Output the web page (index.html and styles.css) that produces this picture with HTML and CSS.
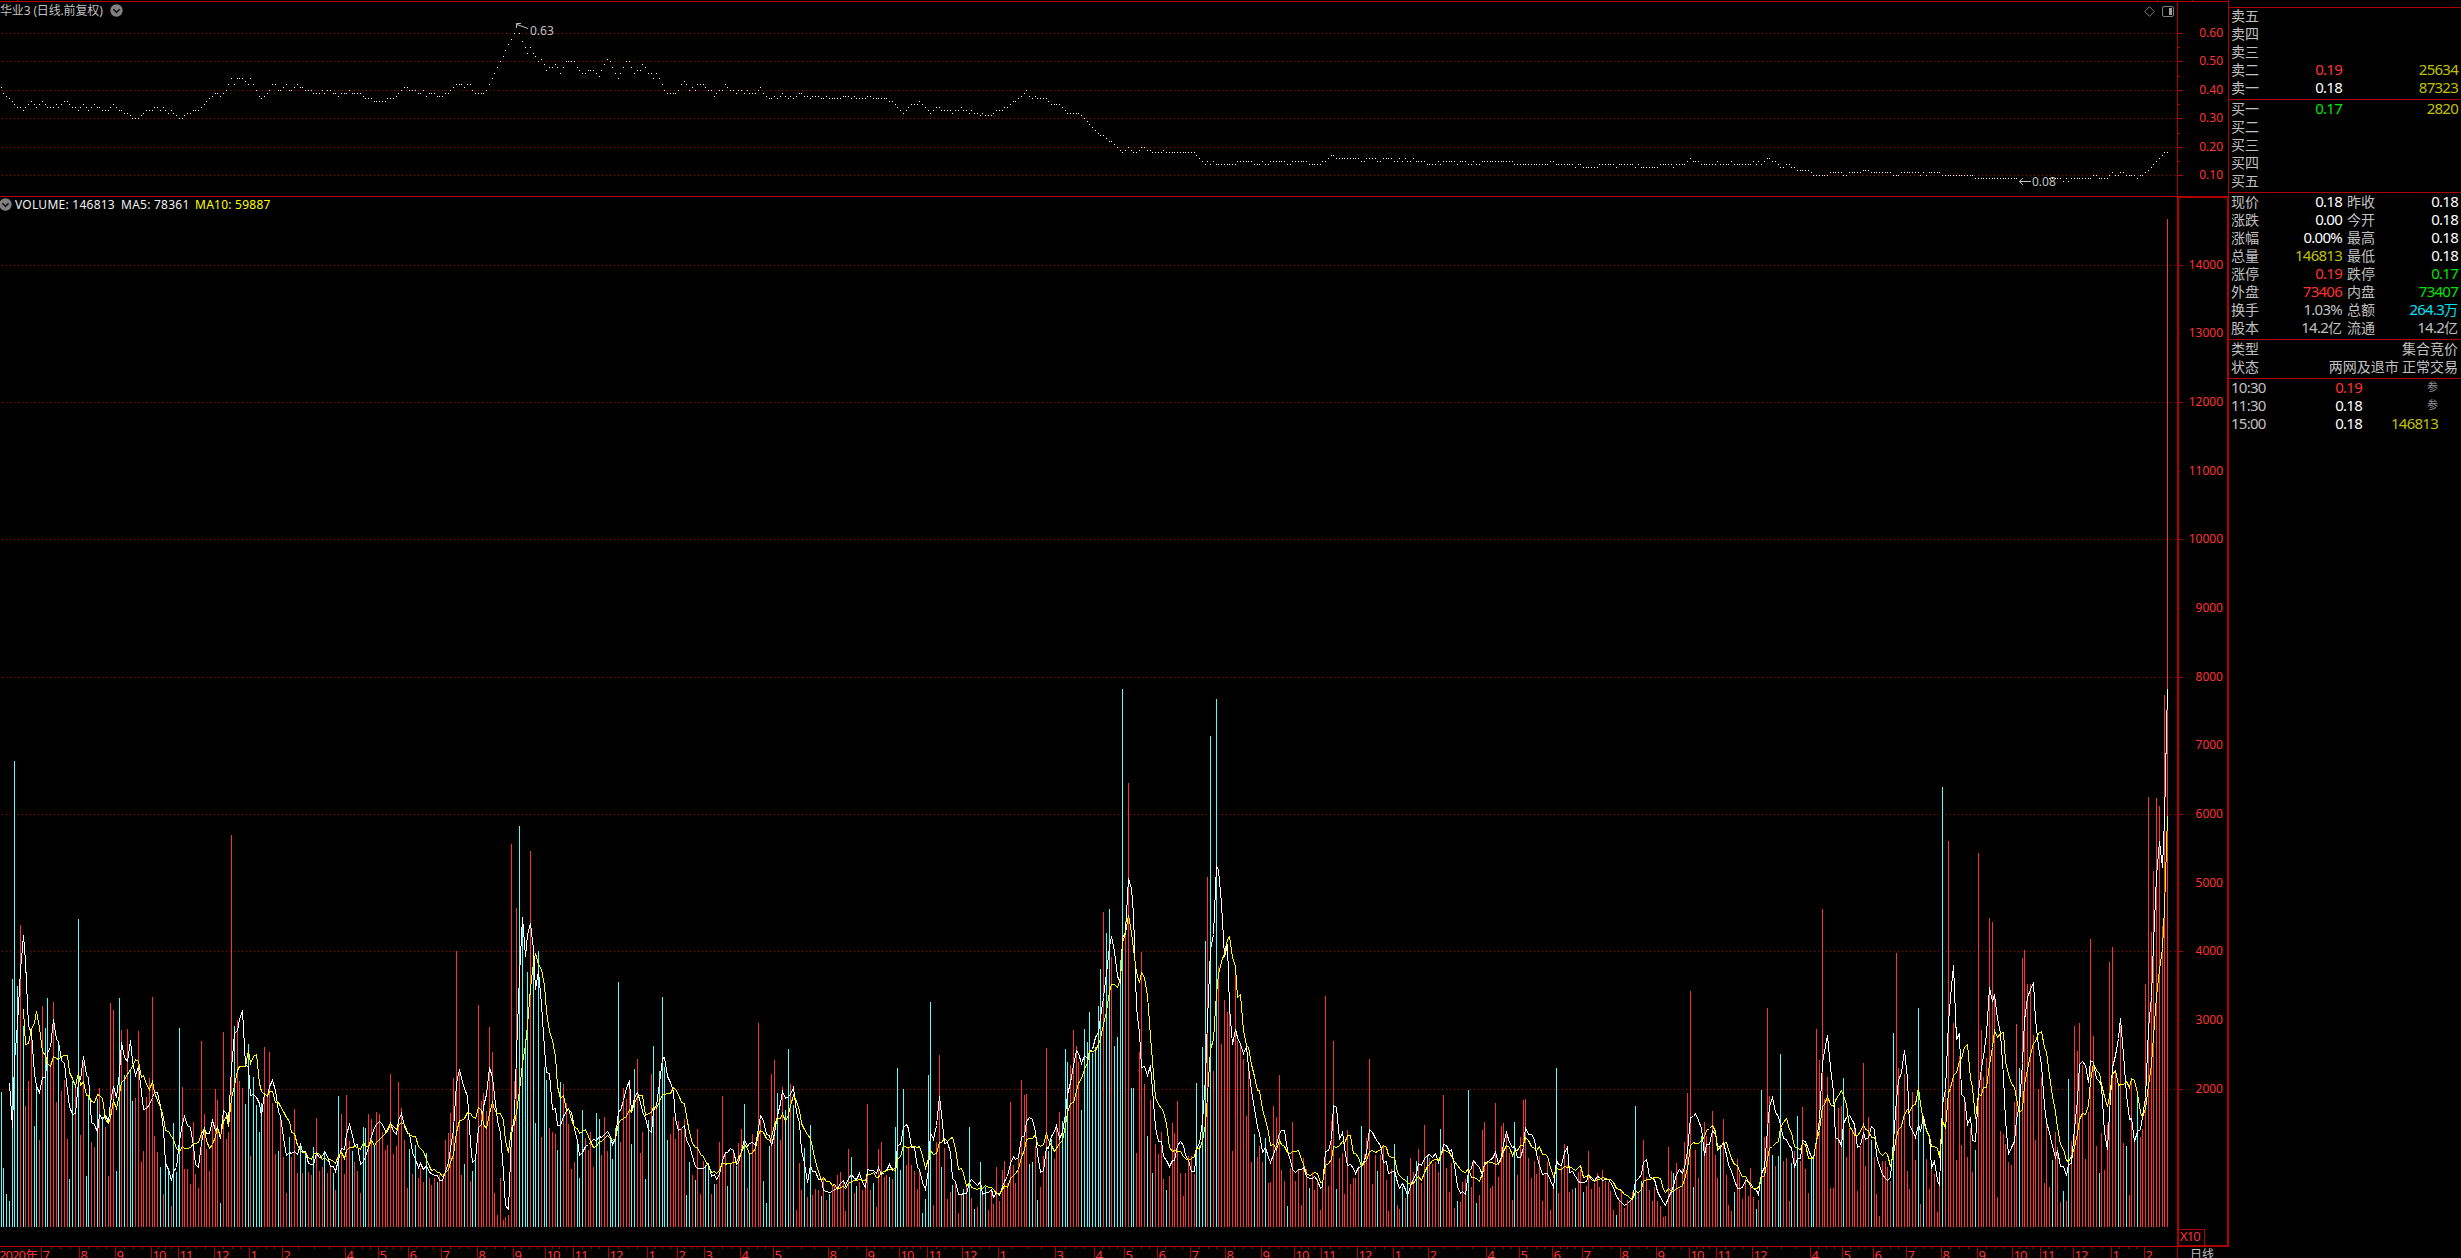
FILE: index.html
```html
<!DOCTYPE html>
<html lang="zh-CN">
<head>
    <meta charset="UTF-8">
    <title>华业3 日线</title>
    <link rel="stylesheet" href="styles.css">
</head>
<body>
    <div id="terminal">
        <div id="charts">
            <div class="pane" id="price-pane">
                <svg id="price-chart" width="2229" height="196" viewBox="0 0 2229 196"></svg>
                <div class="pane-title">
                    <span>华业3 (日线.前复权)</span>
                    <svg class="chevron" width="13" height="13" viewBox="0 0 13 13"><circle cx="6.5" cy="6.5" r="6.2"/><path d="M3.4 5.2l3.1 3.1 3.1-3.1"/></svg>
                </div>
                <div class="pane-tools">
                    <svg width="11" height="11" viewBox="0 0 11 11"><path d="M5.5 .7l4.8 4.8-4.8 4.8L.7 5.5z"/></svg>
                    <svg width="12" height="11" viewBox="0 0 12 11"><rect x=".5" y=".5" width="11" height="10" rx="1.5"/><path class="solid" d="M7 2h3v7H7z"/></svg>
                </div>
            </div>
            <div class="pane" id="volume-pane">
                <svg id="volume-chart" width="2229" height="1050" viewBox="0 196 2229 1050"></svg>
                <div class="pane-title">
                    <svg class="chevron" width="13" height="13" viewBox="0 0 13 13"><circle cx="6.5" cy="6.5" r="6.2"/><path d="M3.4 5.2l3.1 3.1 3.1-3.1"/></svg>
                    <span class="v-total">VOLUME: 146813</span>
                    <span class="v-ma5">MA5: 78361</span>
                    <span class="v-ma10">MA10: 59887</span>
                </div>
            </div>
            <svg id="timeline" width="2229" height="12" viewBox="0 1246 2229 12"></svg>
        </div>

        <div id="quote">
            <div class="block asks">
                <div class="row"><span>卖五</span><b></b><b></b></div>
                <div class="row"><span>卖四</span><b></b><b></b></div>
                <div class="row"><span>卖三</span><b></b><b></b></div>
                <div class="row"><span>卖二</span><b class="up">0.19</b><b class="vol">25634</b></div>
                <div class="row"><span>卖一</span><b class="flat">0.18</b><b class="vol">87323</b></div>
            </div>
            <div class="block bids">
                <div class="row"><span>买一</span><b class="down">0.17</b><b class="vol">2820</b></div>
                <div class="row"><span>买二</span><b></b><b></b></div>
                <div class="row"><span>买三</span><b></b><b></b></div>
                <div class="row"><span>买四</span><b></b><b></b></div>
                <div class="row"><span>买五</span><b></b><b></b></div>
            </div>
            <div class="block stats">
                <div class="row"><span>现价</span><b class="flat">0.18</b><span>昨收</span><b class="flat">0.18</b></div>
                <div class="row"><span>涨跌</span><b class="flat">0.00</b><span>今开</span><b class="flat">0.18</b></div>
                <div class="row"><span>涨幅</span><b class="flat">0.00%</b><span>最高</span><b class="flat">0.18</b></div>
                <div class="row"><span>总量</span><b class="vol">146813</b><span>最低</span><b class="flat">0.18</b></div>
                <div class="row"><span>涨停</span><b class="up">0.19</b><span>跌停</span><b class="down">0.17</b></div>
                <div class="row"><span>外盘</span><b class="up">73406</b><span>内盘</span><b class="down">73407</b></div>
                <div class="row"><span>换手</span><b>1.03%</b><span>总额</span><b class="amount">264.3<i>万</i></b></div>
                <div class="row"><span>股本</span><b>14.2<i>亿</i></b><span>流通</span><b>14.2<i>亿</i></b></div>
            </div>
            <div class="block info">
                <div class="row"><span>类型</span><span>集合竞价</span></div>
                <div class="row"><span>状态</span><span>两网及退市 正常交易</span></div>
            </div>
            <div class="block ticks">
                <div class="row"><b>10:30</b><b class="up">0.19</b><em>参</em></div>
                <div class="row"><b>11:30</b><b class="flat">0.18</b><em>参</em></div>
                <div class="row"><b>15:00</b><b class="flat">0.18</b><b class="vol">146813</b></div>
            </div>
        </div>
    </div>
    <script src="chart.js"></script>
</body>
</html>
```
FILE: styles.css
```css
* {
    box-sizing: border-box;
}

body {
    margin: 0;
    background: #000;
    overflow: hidden;
    font-family: "Noto Sans", "Noto Sans CJK SC", sans-serif;
    font-size: 12px;
    color: #c0c0c0;
}

svg {
    display: block;
}

#terminal {
    display: flex;
    width: 2461px;
    height: 1258px;
}

#charts {
    width: 2229px;
    flex: none;
}

.pane {
    position: relative;
}

/* titles lie over the chart */
.pane-title {
    position: absolute;
    top: 2px;
    left: 0;
    height: 18px;
    display: flex;
    align-items: center;
    white-space: nowrap;
}

#price-pane .pane-title {
    top: 1px;
    gap: 7px;
    letter-spacing: -0.15px;
}

#volume-pane .pane-title {
    top: -1px;
    left: -1px;
    letter-spacing: 0.25px;
}

.pane-title .v-total {
    color: #f0f0f0;
    width: 106px;
    margin-left: 3px;
}

.pane-title .v-ma5 {
    color: #f0f0f0;
    width: 74px;
}

.pane-title .v-ma10 {
    color: #ffff00;
}

.chevron circle {
    fill: #808080;
}

.chevron path {
    fill: none;
    stroke: #101010;
    stroke-width: 1.6;
}

.pane-tools {
    position: absolute;
    top: 6px;
    left: 2144px;
    display: flex;
    gap: 7px;
    fill: none;
    stroke: #808080;
}

.pane-tools .solid {
    fill: #a0a0a0;
    stroke: none;
}

/* chart drawing */
.frame, .tick {
    fill: #b00000;
}

.grid {
    stroke: #b00000;
    stroke-dasharray: 1 3;
    shape-rendering: crispEdges;
}

.bar-up {
    fill: #ff3232;
}

.bar-down {
    fill: #54fcfc;
}

.dots {
    fill: #fff;
}

.ma5, .ma10 {
    fill: none;
    stroke: #fff;
    stroke-width: 1;
    shape-rendering: crispEdges;
}

.ma10 {
    stroke: #ffff00;
}

.scale {
    fill: #ff3232;
    font-size: 12px;
    text-anchor: end;
}

.month {
    fill: #ff3232;
    font-size: 13px;
    letter-spacing: -0.9px;
}

.mark {
    fill: #c0c0c0;
    font-size: 12px;
}

.arrow {
    fill: none;
    stroke: #c0c0c0;
}

/* quote panel */
#quote {
    flex: 1;
    padding-top: 7px;
    font-size: 14px;
}

.block {
    border-top: 1px solid #b00000;
    padding: 0 3px 0 2px;
}

.asks {
    height: 92px;
}

.bids {
    height: 93px;
    padding-top: 1px;
}

.stats {
    height: 147px;
    padding-top: 1px;
}

.info {
    height: 39px;
    padding-top: 1px;
}

.ticks {
    padding-top: 1px;
}

.row {
    display: grid;
    height: 18px;
    line-height: 14px;
    white-space: nowrap;
}

.row span, .row i {
    font-family: "Noto Sans CJK SC", sans-serif;
    font-style: normal;
    font-size: 14px;
    letter-spacing: 0;
}

.row b {
    font-weight: 400;
    font-size: 15px;
    letter-spacing: -0.75px;
    text-align: right;
}

.asks .row, .bids .row {
    grid-template-columns: 40px 71px 1fr;
}

.stats .row {
    grid-template-columns: 40px 71px 38px 1fr;
}

.stats .row span:nth-child(3) {
    padding-left: 5px;
}

.info .row {
    grid-template-columns: 40px 1fr;
}

.info .row span:last-child {
    text-align: right;
}

.ticks .row {
    grid-template-columns: 60px 71px 76px;
}

.ticks .row b:first-child {
    text-align: left;
}

.ticks .row em {
    font-style: normal;
    font-size: 11px;
    color: #909090;
    text-align: right;
}

.up {
    color: #ff3232;
}

.down {
    color: #00e600;
}

.flat {
    color: #fff;
}

.vol {
    color: #c0c000;
}

.amount {
    color: #02e2f4;
}
```
FILE: chart.js
```js
const BAR_X0 = 1.24;
const BAR_STEP = 2.7422;
const BASE_Y = 1227;

// bar tops, grouped; "c" marks a falling day. y = top + value / scale
const VOLUME = [
    { top: 740, scale: 3, bars: `
        c1056 c1285 c1362 c1383 c717 c63 c738 555 c858 1098 1023 864 c1158 c1042 1200 798 c864 c774 970 786
        1086 c905 1053 1020 1197 c1317 c1023 1035 c537 1185 965 c1308 c1065 1206 1221 c1077 1044 c1130 1160 1308
        789 810 c1293 c774 870 c1005 867 c990 c1083 1074 873 1266 1233 1071 1014 771 1188 1236 c1281 1362
        c1272 c1290 1398 c1149 c1296 c864 1041 1287 1287 1332 1146 1302 1344 903 1122 1227 1293 1158 1047 1080
        c1389 876 1197 1176 285 c858 840 1023 1044 c1092 c912 1248 c1011 c1095 c1176 c1090 921 1060 936 1089
        1242 c1233 1140 1251 1359 c1191 1251 1107 1299 c1215 1299 c1240 1296 1305 c1221 1134 1293 1281 c1240 1299
        1275 c1299 1350 c1068 1122 1302 1065 1203 c1233 1266 1293 1359 c1161 c1164 1122 1137 c1217 1116 1122 1175
        1230 1215 1002 1242 1218 1026 1104 1200 1344 c1227 1302 c1215 1314 1284 1326 c1239 1314 1335 1314 c1326
        1305 1320 1200 1179 1119 1014 633 993 1305 c1272 1137 1323 c1293 c1259 795` },
    { top: 800, scale: 3, bars: `
        903 879 933 681 756 1179 1245 1134 1260 1251 1245 132 843 324 c78 c375 c717 c516 153 c480
        c969 c453 1011 c801 c840 984 996 1002 c1050 c846 852 910 972 1107 1086 c1030 c1134 c930 1014 1050
        996 1101 c939 c958 1065 951 1053 c1010 c1077 c985 c546 1026 864 897 860 c1032 c807 777 1059 996
        c1137 c960 822 c738 912 c813 c591 c801 c1020 1002 951 1017 963 985 957 c1185 c1086 1125 c1140 987
        1182 1083 c1095 c1100 1182 c1152 1152 1026 888 1060 c1158 c1088 1060 c1098 1029 987 c912 1164 c1058 1002
        1032 669 960 c1143 c1209 c1038 822 780 c879 1020 861 c930 c747 852 c915 1230 1089 1170 c1044 1191
        c975 1185 1167 1170 c1188 1135 1200 c1182 1158 1158 1125 1116 1143 1233 1047 c1071 1179 c1158 1146 1170
        1146 912 1170 c1149 1221 1047 1026 1131 1125 c1131 1137 c981 c804 c1110 c867 1095 1040 1095 1113 1167
        1113 c1239 c1197 c825 c606 1215 1026 765 c1101 1044 1197 1176 c1155 1150 1239` },
    { top: 680, scale: 2.7128, bars: `
        1397 c1381 1370 c1213 1405 c1435 1430 c1308 1393 c1375 1438 1385 1422 1321 1413 1329 1305 1365 1145 1316
        1365 1283 1085 1126 1123 c1313 c1308 1264 c1411 1375 1291 998 c1278 c1245 1299 1215 1172 c1196 c1001 c1036
        1044 949 993 1036 c1167 c947 c982 c901 c1012 c996 c884 c784 629 c686 c621 751 c993 c968 c760 c24
        655 279 c1107 c1107 1283 1009 738 1096 c1237 1139 c1337 1259 1286 1226 1354 c1384 1346 1202 1229 1142
        1337 1400 1337 1291 1291 1340 c1093 c1264 c996 c708 534 c152 1061 c52 776 987 868 901 898 1278
        790 979 990 1028 1183 1050 1308 c1232 1294 1264 1308 c1242 1365 1362 1156 1185 1072 1329 1359 c1427
        1324 1199 1359 1327 1424 1297 1327 c1378 1335 1384 1354 1438 1359 857 1373 1196 979 c1381 1297 1283
        1394 1221 1367 1351 1351 1319 c1210 1286 1242 1028 1367 1289 c1332 1289 1264 1356 1440 1327 c1259 1424
        1435 c1375 1405 c1346 1297 1335 c1305 1272 1365 1207 c1289 1297 1313 1308 1335` },
    { top: 980, scale: 3, bars: `
        c447 345 564 636 549 684 c663 666 606 597 c330 621 543 c669 645 450 426 545 624 618
        369 591 438 429 459 519 660 c426 585 471 360 357 534 594 543 582 528 663 580 546
        690 624 c264 639 558 492 555 636 627 c624 576 567 c636 618 513 627 609 579 621 570
        603 606 633 690 c705 663 633 684 660 660 636 c378 639 c603 480 591 630 663 621 663
        678 711 708 501 573 c579 549 627 564 486 339 33 c621 510 594 c468 426 468 498 393
        525 594 c495 417 585 675 693 c636 537 580 657 597 648 564 651 c687 660 c330 471 84
        348 c525 558 c528 c222 543 534 663 c549 513 c408 543 381 567 639 c532 c534 147 240 -214
        357 291 624 624 466 384` },
    { top: 740, scale: 3, bars: `
        1098 c1014 1251 1163 1170 1165 1353 1218 969 1278 1131 c1200 1251 1362 1428 1263 1263 1281 1323 c879
        639 984 1150 1002 1293 1347 1056 1260 c804 1392 c1130 1257 1347 1280 1302 1416 1325 c141 1045 303
        1035 849 1260 947 1215 1080 1251 1164 1296 c1230 339 870 1011 954 534 546 765 1371 1173 1182
        1212 1266 1275 1086 852 c984 654 630 732 732 885 1200 1047 1011 1329 1150 1341 c1260 1176 1220
        1386 c1353 1383 c1017 1203 858 933 849 975 1257 1116 597 888 1218 c1299 1179 1290 1155 666 621
        999 c1030 858 1209 c1218 1365 1020 1200 c1065 1191 1167 732 171 576 393 174 198 558 -135 -1563` }
];

// closing prices in cents, "value*count" for runs
const CLOSES = `
    41 39 38 37 36 35 34*2 33 34 35 36 35 34 35 36 35 34*3 35 34 35 36*2 35 34*2 33 34 35 34 33 34 35 34*2 33*3
    34 35 34 33*2 32*2 31 30*3 31 32 33*3 34*2 33 34 33 32 33 32 31 30*2 31 32*2 33*3 34 35 36 37 38 39*2 38 39
    40 42 44 42 44*3 43 42 44 42 40 38 37 38 39 40 42*2 40*2 41 42 40*2 41 42 41*2 40*3 39*3 40 39 40*2 39*2 38
    39*3 40 39*4 38 37*3 36*5 37*3 38 39 40 41*2 40*3 39*2 40 38 39*3 38*3 39*2 40 41 42*3 41 42*2 40 39*4 40
    42 44 46 48 50 52 54 56 58 60 63 60 57 55 53 55 53 52 50 51 49 47 48*2 49 48 46 48 50*4 48 47 46*2 47*3
    46 45 47 49 51 50
    48 46 44 46 48 50*2 48 46 47*2 49 48 46*2 44 46 44 42 40 39*4 40 42 43 42 40 41 40 42*3 41 40*2 38 39 40*2
    42 41 40*2 39 40*2 39 40 39*3 40 41 39 38 37*2 38 37 38 39 38 37 38 37 38 39*2 38*2 37 38*3 37*2 38 37*5
    38*3 37 38 37*4 38*2 37*6 36*2 35 34 33 32 33 34 35*3 36 35 34 33 32 33 34*2 33*4 32 33*2 34 33*2 32 33
    32*2 31 32 31*3 32 33*2
    33 34*2 35 36*2 37 38 39 40 38 37 38 37*4 36 35*4 34 33 32*5 31 30 29 28 27 26 25 24*2 23 22*2 21 20 19 18
    19 20 19 18*2 19 20*2 19*2 18*4 19 18*11 17 16 15 14 15 14 15 14*8 15*6 14*3 15 14*2 15*6 14*2 15*6 14*5
    15*2 16 17*2 16*9 15*2 16*4 15*2 16*4 15*2 16 15 16 15*2 16 15*4 14*4 15 14 15*5 14 15*3 14*2 15 14*2
    15*12 14*13 15*2 14*7 13 14*2 13*6 14*6 13 14*6 13 14 13*4
    13*3 14*5 13 14*4 15 16 15*3 14*6 15 14*4 15 14*7 15 14 15 14 15 16*2 15*2 14 13*2 14*2 13*2 12*5 11 10*6
    11*5 10*2 11*5 12*3 11*8 10*3 11*7 10 11 10 11*5 10*12 9*16 8*11 9*5 8 9 8 9*8 10*2 9*4 10 11 10*2 11*2
    10*4 9 10*2 11 12 13 14 15 16 17 18*2`;

// [x of the separator, month]
const MONTHS = [
    [41, 7], [79, 8], [115, 9], [151, 10], [178, 11], [214, 12], [249, 1], [282, 2], [345, 4], [378, 5],
    [408, 6], [441, 7], [477, 8], [513, 9], [545, 10], [573, 11], [608, 12], [647, 1], [677, 2], [704, 3],
    [740, 4], [773, 5], [828, 8], [866, 9], [899, 10], [927, 11], [962, 12], [998, 1], [1055, 3], [1094, 4],
    [1124, 5], [1157, 6], [1190, 7], [1225, 8], [1261, 9], [1294, 10], [1321, 11], [1357, 12], [1393, 1],
    [1428, 2], [1486, 4], [1519, 5], [1552, 6], [1582, 7], [1620, 8], [1656, 9], [1689, 10], [1716, 11],
    [1752, 12], [1810, 4], [1842, 5], [1873, 6], [1906, 7], [1941, 8], [1977, 9], [2012, 10], [2040, 11],
    [2073, 12], [2111, 1], [2144, 2]
];

const barX = i => Math.floor(BAR_X0 + i * BAR_STEP);
const rect = (x, y, w, h, cls) => `<rect class="${cls}" x="${x}" y="${y}" width="${w}" height="${h}"/>`;
const label = (x, y, text, cls) => `<text class="${cls}" x="${x}" y="${y}">${text}</text>`;
const gridLine = y => `<path class="grid" d="M2 ${y + 0.5}H2177"/>`;

function drawPrice() {
    let out = '';
    const priceY = cents => Math.round(175.2 - (cents - 10) * 2.845);

    for (let c = 10; c <= 60; c += 10) {
        const y = priceY(c);
        out += gridLine(y) + rect(2178, y, 5, 1, 'tick');
        out += label(2223, y + 4, (c / 100).toFixed(2), 'scale');
        if (c < 60) out += rect(2178, priceY(c + 5), 2, 1, 'tick');
    }

    let i = 0;
    let d = '';
    CLOSES.trim().split(/\s+/).forEach(run => {
        const [cents, count] = run.split('*').map(Number);
        for (let n = 0; n < (count || 1); n++, i++) {
            // the days under the low label are not shown
            if (i >= 736 && i < 747) continue;
            if (i === 188) continue;
            d += `M${barX(i)} ${priceY(cents)}h1v1h-1z`;
        }
    });
    out += `<path class="dots" d="${d}"/>`;

    // high and low marks
    out += '<path class="arrow" d="M528 28.5L517 24.5M521 23.5h-4.5v4.5"/>' + label(530, 35, '0.63', 'mark');
    out += '<path class="arrow" d="M2031 181.5H2019M2023 178l-3.5 3.5 3.5 3.5"/>' + label(2032, 186, '0.08', 'mark');

    out += rect(0, 1, 2229, 1, 'frame') + rect(2177, 1, 1, 195, 'frame') + rect(2228, 0, 1, 196, 'frame');
    out += rect(17, 0, 1, 1, 'frame') + rect(2157, 0, 1, 1, 'frame') + rect(2192, 0, 1, 1, 'frame');
    document.getElementById('price-chart').innerHTML = out;
}

function movingAverage(tops, days) {
    // tops[0] is the day before the first visible bar
    const points = [];
    for (let i = days - 1; i < tops.length; i++) {
        let sum = 0;
        for (let n = 0; n < days; n++) sum += tops[i - n];
        points.push(`${barX(i - 1) + 0.5},${Math.round(sum / days) + 0.5}`);
    }
    return points.join(' ');
}

function drawVolume() {
    let out = '';
    const volumeY = v => Math.floor(BASE_Y - 0.4 - v * 0.06868);

    for (let v = 2000; v <= 14000; v += 1000) {
        const y = volumeY(v);
        if (v % 2000 === 0) out += gridLine(y) + rect(2179, y, 4, 1, 'tick');
        else out += rect(2179, y, 1, 1, 'tick');
        out += label(2223, y + 4, v, 'scale');
    }

    const tops = [761];
    let up = '';
    let down = '';
    VOLUME.forEach(group => {
        group.bars.trim().split(/\s+/).forEach(item => {
            const falling = item[0] === 'c';
            const y = group.top + Number(falling ? item.slice(1) : item) / group.scale;
            const bar = `M${barX(tops.length - 1)} ${Math.round(y)}h1V${BASE_Y}h-1z`;
            if (falling) down += bar;
            else up += bar;
            tops.push(y);
        });
    });
    out += `<path class="bar-up" d="${up}"/><path class="bar-down" d="${down}"/>`;
    out += `<polyline class="ma5" points="${movingAverage(tops, 5)}"/>`;
    out += `<polyline class="ma10" points="${movingAverage(tops, 10)}"/>`;

    out += rect(0, 196, 2177, 1, 'frame') + rect(2177, 196, 52, 2, 'frame');
    out += rect(2177, 196, 2, 1050, 'frame') + rect(2227, 196, 2, 1050, 'frame') + rect(2177, 1245, 52, 1, 'frame');
    out += rect(2179, 1229, 26, 1, 'frame') + rect(2204, 1229, 1, 16, 'frame');
    out += '<text class="month" x="2180" y="1241">X10</text>';
    document.getElementById('volume-chart').innerHTML = out;
}

function drawTimeline() {
    let out = rect(0, 1246, 2229, 1, 'frame') + rect(2177, 1246, 1, 12, 'frame');
    out += label(-1, 1259.5, '2020年', 'month');
    MONTHS.forEach(([x, month], i) => {
        const next = i + 1 < MONTHS.length ? MONTHS[i + 1][0] : 2184;
        out += rect(x, 1246, 1, 12, 'tick') + label(x + 1.5, 1259.5, month, 'month');
        for (let q = 1; q < 4; q++) {
            const tx = Math.round(x + (next - x) * q / 4);
            if (tx < 2146) out += rect(tx, 1247, 1, 2, 'tick');
        }
    });
    out += label(2190, 1258.5, '日线', 'mark');
    document.getElementById('timeline').innerHTML = out;
}

drawPrice();
drawVolume();
drawTimeline();
```
